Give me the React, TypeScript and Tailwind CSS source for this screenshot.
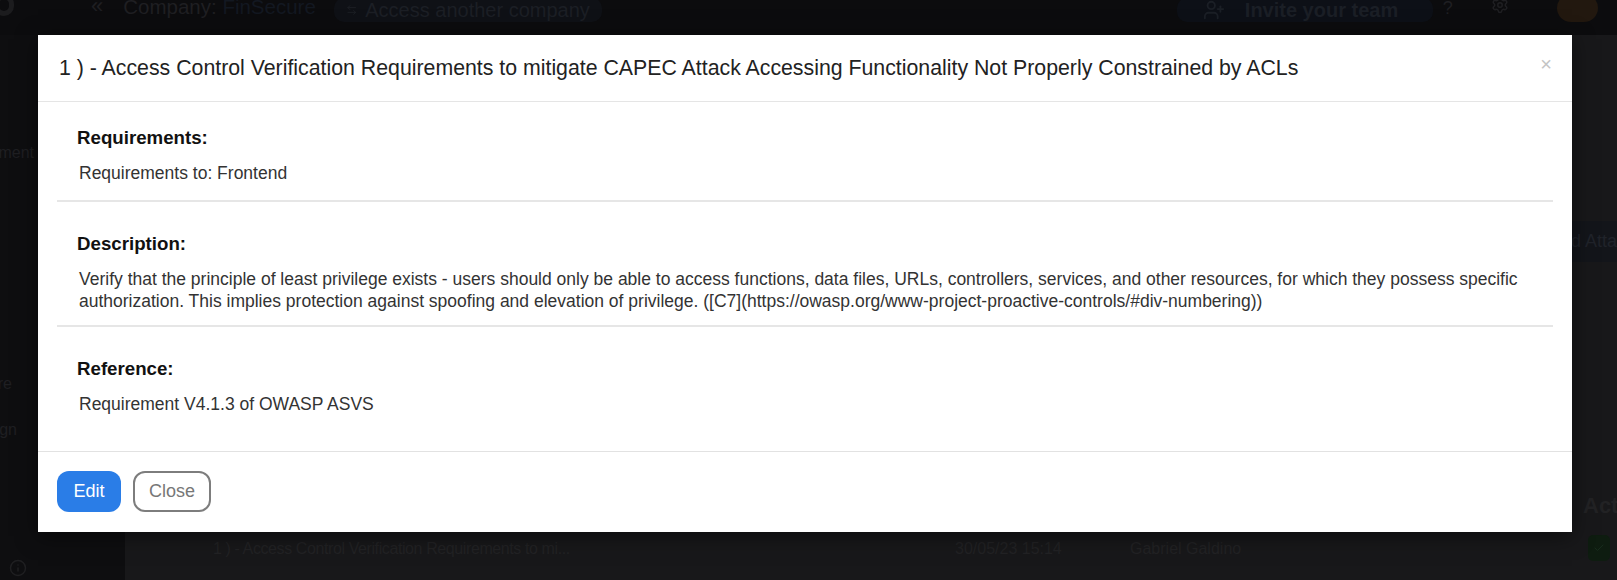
import { Info, Settings, UserPlus, ArrowLeftRight, Check } from "lucide-react";

const sections = [
  { title: "Requirements:", body: "Requirements to: Frontend" },
  {
    title: "Description:",
    body: "Verify that the principle of least privilege exists - users should only be able to access functions, data files, URLs, controllers, services, and other resources, for which they possess specific authorization. This implies protection against spoofing and elevation of privilege. ([C7](https://owasp.org/www-project-proactive-controls/#div-numbering))",
  },
  { title: "Reference:", body: "Requirement V4.1.3 of OWASP ASVS" },
];

function Backdrop() {
  return (
    <div className="absolute inset-0 flex flex-col bg-[#18181a] text-[#1f1f22]">
      <div className="h-[35px] flex items-start bg-[#0c0c0e] whitespace-nowrap">
        <div className="w-[20px] h-[22px] mt-[-6px] ml-[-6px] rounded-full border-[5px] border-[#1c1c1e]" />
        <span className="ml-[77px] text-[22px] leading-[20px] mt-[-4px]">«</span>
        <span className="ml-[20px] text-[20.5px] leading-[20px] mt-[-3px]">
          Company: <span className="text-[#131821]">FinSecure</span>
        </span>
        <div className="ml-[18px] h-[24px] w-[268px] mt-[-2px] rounded-[10px] bg-[#0f1116] flex items-center gap-2 px-[12px] text-[20px] text-[#1c1f25]">
          <ArrowLeftRight size={20} /> Access another company
        </div>
        <div className="ml-[575px] h-[24px] w-[256px] mt-[-2px] rounded-[10px] bg-[#0d1017] flex items-center gap-5 px-[26px] text-[20px] font-bold text-[#1b1f26]">
          <UserPlus size={22} /> Invite your team
        </div>
        <span className="ml-[10px] text-[18px] leading-[16px]">?</span>
        <Settings size={18} className="ml-[38px] mt-[-4px]" />
        <div className="ml-[48px] w-[41px] h-[28px] mt-[-6px] rounded-full bg-[#22180f]" />
      </div>
      <div className="flex flex-1">
        <div className="w-[125px] bg-[#0e0e10] relative text-[16px] whitespace-nowrap">
          <div className="absolute right-[91px] top-[106px]">Management</div>
          <div className="absolute right-[113px] top-[337px]">Secure</div>
          <div className="absolute right-[108px] top-[383px]">Design</div>
          <Info size={18} className="absolute left-[9px] top-[524px] text-[#1f1f21]" />
        </div>
        <div className="flex-1 relative text-[16px] text-[#222224]">
          <div className="absolute right-0 top-[186px] w-[60px] h-[41px] bg-[#13151a] px-[4px] leading-[41px] text-[18px] overflow-hidden whitespace-nowrap text-[#20232a]">
            ad Attack
          </div>
          <div className="absolute left-[1458px] top-[454px] text-[22px] font-bold whitespace-nowrap">
            Action
          </div>
          <div className="absolute left-[88px] top-[502px] whitespace-nowrap tracking-tight">
            1 ) - Access Control Verification Requirements to mi...
          </div>
          <div className="absolute left-[830px] top-[502px] whitespace-nowrap">30/05/23 15:14</div>
          <div className="absolute left-[1005px] top-[502px] whitespace-nowrap">Gabriel Galdino</div>
          <div className="absolute left-[1463px] top-[500px] w-[22px] h-[26px] rounded-[5px] bg-[#0e1c10] flex items-center justify-center text-[#172c1c]">
            <Check size={12} />
          </div>
        </div>
      </div>
    </div>
  );
}

export default function App() {
  return (
    <div
      className="relative w-[1617px] h-[580px] overflow-hidden"
      style={{ fontFamily: '"Liberation Sans", Arial, sans-serif' }}
    >
      <Backdrop />
      <div className="relative pt-[35px] pl-[38px]">
        <div className="w-[1534px] bg-white shadow-[0_4px_20px_rgba(0,0,0,0.5)]">
          <div className="h-[67px] flex items-center justify-between pl-[21px] pr-[20px] border-b border-[#e5e5e5]">
            <h2 className="text-[21.3px] text-[#222] mt-[2px] whitespace-nowrap">
              1 ) - Access Control Verification Requirements to mitigate CAPEC Attack Accessing Functionality Not Properly Constrained by ACLs
            </h2>
            <button className="text-[20px] leading-none text-[#c4c4c4] mt-[-8px]">×</button>
          </div>
          <div className="px-[19px] pb-[36px]">
            {sections.map((s, i) => (
              <div
                key={s.title}
                className={
                  i < sections.length - 1
                    ? "border-b-2 border-[#e6e6e6] " + (i === 0 ? "pt-[24px] pb-[16px]" : "pt-[30px] pb-[13px]")
                    : "pt-[30px]"
                }
              >
                <h3 className="pl-[20px] text-[18.7px] leading-[24px] font-bold text-[#111] mb-[12px]">
                  {s.title}
                </h3>
                <p className="pl-[22px] pr-[20px] text-[17.5px] leading-[22px] text-[#333]">{s.body}</p>
              </div>
            ))}
          </div>
          <div className="border-t border-[#e2e2e2] px-[19px] pt-[19px] pb-[20px] flex gap-[12px]">
            <button className="h-[41px] w-[64px] rounded-[12px] bg-[#2a7de7] text-white text-[18px]">
              Edit
            </button>
            <button className="h-[41px] w-[78px] rounded-[12px] border-2 border-[#7d7d7d] text-[#777] text-[18px]">
              Close
            </button>
          </div>
        </div>
      </div>
    </div>
  );
}
